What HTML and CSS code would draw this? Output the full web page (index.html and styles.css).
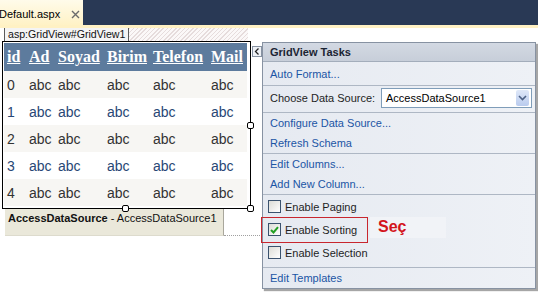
FILE: index.html
```html
<!DOCTYPE html>
<html lang="tr">
<head>
    <meta charset="UTF-8">
    <title>Default.aspx - GridView Tasks</title>
    <link rel="stylesheet" href="styles.css">
</head>
<body>
    <div class="doc-tabs">
        <div class="tab">
            <span class="tab-title">Default.aspx</span>
            <svg class="tab-close" width="9" height="9" viewBox="0 0 9 9">
                <path d="M1 1L8 8M8 1L1 8" stroke="#6b6b6b" stroke-width="1.4" fill="none"/>
            </svg>
        </div>
    </div>
    <div class="tab-strip"></div>

    <div class="designer">
        <div class="tag-row">
            <span class="tag">asp:GridView#GridView1</span>
            <span class="tag-hatch"></span>
        </div>

        <div class="grid-frame">
            <table class="grid">
                <colgroup>
                    <col class="c-id"><col class="c-ad"><col class="c-soyad">
                    <col class="c-birim"><col class="c-tel"><col class="c-mail">
                </colgroup>
                <thead>
                    <tr><th>id</th><th>Ad</th><th>Soyad</th><th>Birim</th><th>Telefon</th><th>Mail</th></tr>
                </thead>
                <tbody>
                    <tr class="row"><td>0</td><td>abc</td><td>abc</td><td>abc</td><td>abc</td><td>abc</td></tr>
                    <tr class="alt"><td>1</td><td>abc</td><td>abc</td><td>abc</td><td>abc</td><td>abc</td></tr>
                    <tr class="row"><td>2</td><td>abc</td><td>abc</td><td>abc</td><td>abc</td><td>abc</td></tr>
                    <tr class="alt"><td>3</td><td>abc</td><td>abc</td><td>abc</td><td>abc</td><td>abc</td></tr>
                    <tr class="row"><td>4</td><td>abc</td><td>abc</td><td>abc</td><td>abc</td><td>abc</td></tr>
                </tbody>
            </table>
            <span class="handle h-right"></span>
            <span class="handle h-bottom"></span>
            <span class="handle h-corner"></span>
        </div>

        <div class="ds-row">
            <div class="ds-label"><b>AccessDataSource</b> - AccessDataSource1</div>
            <div class="ds-fill"></div>
        </div>

        <!-- smart tag paneli -->
        <div class="tasks">
            <span class="tasks-toggle">
                <svg width="6" height="7" viewBox="0 0 6 7"><path d="M4.5 0.5L1.5 3.5L4.5 6.5" stroke="#222" stroke-width="1.3" fill="none"/></svg>
            </span>
            <div class="tasks-header">GridView Tasks</div>

            <div class="tasks-section s-a">
                <a class="task-link">Auto Format...</a>
            </div>

            <div class="tasks-section s-b">
                <span class="task-label">Choose Data Source:</span>
                <div class="select">
                    <span class="select-value">AccessDataSource1</span>
                    <span class="select-btn">
                        <svg width="9" height="6" viewBox="0 0 9 6"><path d="M1 1L4.5 4.5L8 1" stroke="#4d6185" stroke-width="1.6" fill="none"/></svg>
                    </span>
                </div>
            </div>

            <div class="tasks-section s-c">
                <a class="task-link">Configure Data Source...</a>
                <a class="task-link">Refresh Schema</a>
            </div>

            <div class="tasks-section s-c">
                <a class="task-link">Edit Columns...</a>
                <a class="task-link">Add New Column...</a>
            </div>

            <div class="tasks-section s-e">
                <label class="task-check"><span class="box"></span>Enable Paging</label>
                <label class="task-check marked">
                    <span class="box">
                        <svg width="9" height="8" viewBox="0 0 9 8"><path d="M1 4L3.5 6.5L8 1.2" stroke="#22a024" stroke-width="2" fill="none"/></svg>
                    </span>Enable Sorting
                    <span class="mark-box"></span>
                    <span class="note">Seç</span>
                </label>
                <label class="task-check"><span class="box"></span>Enable Selection</label>
            </div>

            <div class="tasks-section s-f">
                <a class="task-link">Edit Templates</a>
            </div>
        </div>
    </div>
</body>
</html>
```

FILE: styles.css
```css
* {
    margin: 0;
    padding: 0;
    box-sizing: border-box;
}

body {
    width: 538px;
    height: 293px;
    overflow: hidden;
    background: white;
    font-family: 'Liberation Sans', Arial, sans-serif;
    font-size: 11px;
    color: #1e1e1e;
}

/* belge sekmeleri */
.doc-tabs {
    height: 25px;
    background: #293955;
    display: flex;
}

.tab {
    height: 25px;
    width: 83px;
    background: linear-gradient(#fffbea, #fff2c6);
    display: flex;
    align-items: center;
    padding-top: 3px;
}

.tab-title {
    margin-left: -1px;
    color: #000;
}

.tab-close {
    margin-left: 11px;
}

.tab-strip {
    height: 3px;
    background: #fff1c4;
}

.designer {
    position: relative;
}

.tag-row {
    display: flex;
    height: 13px;
    margin-left: 4px;
    width: 244px;
}

.tag {
    padding: 0 3px 0 3px;
    border-left: 1px solid #5a5a5a;
    border-right: 1px solid #5a5a5a;
    background: #f4f4f4;
    line-height: 13px;
    font-size: 10.6px;
    color: #111;
}

.tag-hatch {
    flex: 1;
    background: repeating-linear-gradient(135deg, #e6dcdc 0 1px, #fbf8f8 1px 3px);
}

/* GridView */
.grid-frame {
    position: relative;
    margin-left: 2px;
    width: 249px;
    border: 1px solid #000;
    padding: 1px 3px 2px 1px;
}

.grid {
    width: 243px;
    border-collapse: collapse;
    table-layout: fixed;
}

.c-id { width: 22px; }
.c-ad { width: 29px; }
.c-soyad { width: 49px; }
.c-birim { width: 46px; }
.c-tel { width: 58px; }
.c-mail { width: 39px; }

.grid th {
    height: 28px;
    background: #5d7b9d;
    color: white;
    text-align: left;
    padding: 0 0 0 3px;
    font-family: 'Liberation Serif', 'Times New Roman', serif;
    font-size: 16px;
    font-weight: bold;
    text-decoration: underline;
    white-space: nowrap;
}

.grid td {
    height: 27px;
    padding: 0 0 0 3px;
    font-size: 14px;
    white-space: nowrap;
}

.grid tr.row {
    background: #f7f6f3;
    color: #333333;
}

.grid tr.alt {
    background: white;
    color: #284775;
}

.handle {
    position: absolute;
    width: 7px;
    height: 7px;
    background: white;
    border: 1px solid #000;
    border-radius: 2px;
}

.h-right { left: 244px; top: 80px; }
.h-bottom { left: 119px; top: 163px; }
.h-corner { left: 244px; top: 163px; }

/* veri kaynağı */
.ds-row {
    display: flex;
    margin-left: 5px;
    width: 257px;
}

.ds-label {
    width: 219px;
    height: 27px;
    background: #eae8da;
    border-right: 1px solid #a9a79c;
    border-bottom: 1px solid #dddbcd;
    padding: 2px 0 0 3px;
    line-height: 14px;
    color: #111;
}

.ds-fill {
    flex: 1;
    height: 27px;
    border-bottom: 1px dotted #a0a0a0;
}

/* GridView Tasks paneli */
.tasks {
    position: absolute;
    left: 262px;
    top: 14px;
    width: 274px;
    height: 247px;
    border: 1px solid #8792a2;
    background: linear-gradient(90deg, #e6eaf1, #eef1f6);
    box-shadow: 2px 2px 1px rgba(0,0,0,0.35);
}

.tasks-toggle {
    position: absolute;
    left: -11px;
    top: 3px;
    width: 10px;
    height: 11px;
    border: 1px solid #8792a2;
    background: #eef1f6;
    display: flex;
    align-items: center;
    justify-content: center;
}

.tasks-header {
    height: 19px;
    line-height: 18px;
    background: linear-gradient(#d3d9e3, #c7ced9);
    border-bottom: 1px solid #a3adbb;
    padding-left: 7px;
    font-weight: bold;
    color: #1b2433;
}

.tasks-section {
    border-bottom: 1px solid #aeb7c4;
    display: flex;
    flex-direction: column;
}

.s-a { height: 24px; padding-top: 2px; }
.s-b { height: 27px; flex-direction: row; align-items: center; padding: 0 0 2px 7px; }
.s-c { height: 41px; }
.s-e { height: 73px; }
.s-f { height: 20px; border-bottom: none; }

.task-link {
    height: 20px;
    line-height: 20px;
    padding-left: 7px;
    color: #1b55a5;
}

.task-label {
    width: 111px;
}

.select {
    width: 151px;
    height: 20px;
    border: 1px solid #7f9db9;
    background: white;
    display: flex;
    align-items: center;
    padding-left: 4px;
}

.select-value {
    flex: 1;
    line-height: 18px;
    color: #000;
}

.select-btn {
    width: 13px;
    height: 16px;
    margin-right: 2px;
    border-radius: 2px;
    background: linear-gradient(#dfe8f8, #b9cbee);
    display: flex;
    align-items: center;
    justify-content: center;
}

.task-check {
    position: relative;
    height: 23px;
    display: flex;
    align-items: center;
    padding-left: 5px;
}

.box {
    width: 13px;
    height: 13px;
    margin-right: 4px;
    border: 1px solid #3a526e;
    background: linear-gradient(135deg, #dcdcd6, #ffffff);
    display: flex;
    align-items: center;
    justify-content: center;
}

.mark-box {
    position: absolute;
    left: -2px;
    top: -1px;
    width: 107px;
    height: 26px;
    border: 1px solid #c8262e;
}

.note {
    position: absolute;
    left: 107px;
    top: -1px;
    width: 76px;
    height: 21px;
    background: #f1f3f7;
    padding-left: 8px;
    color: #d3141c;
    font-size: 16px;
    font-weight: bold;
    line-height: 20px;
}
```
